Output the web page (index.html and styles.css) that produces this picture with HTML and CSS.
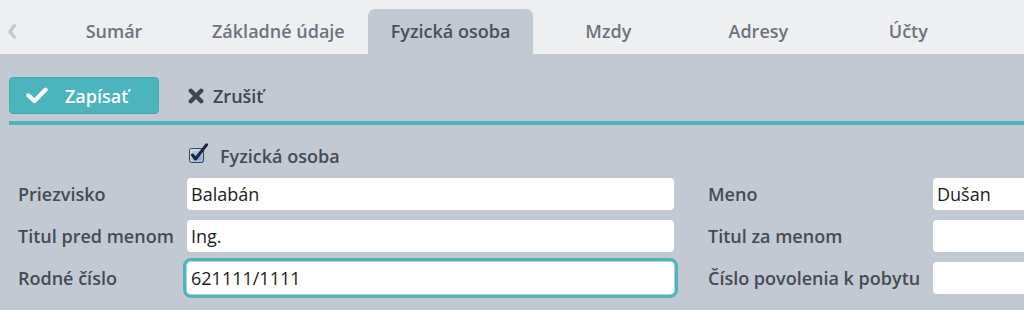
FILE: index.html
```html
<!DOCTYPE html>
<html lang="sk">
<head>
<meta charset="utf-8">
<title>Fyzická osoba</title>
<link rel="stylesheet" href="styles.css">
</head>
<body>
<div class="tabs">
  <span class="prev"><svg width="8" height="15" viewBox="0 0 8 15"><path d="M6.3 1.8 L2 7.5 L6.3 13.2" fill="none" stroke="#c4c7cc" stroke-width="3.2" stroke-linecap="round" stroke-linejoin="round"/></svg></span>
  <div class="tab">Sumár</div>
  <div class="tab">Základné údaje</div>
  <div class="tab active">Fyzická osoba</div>
  <div class="tab">Mzdy</div>
  <div class="tab">Adresy</div>
  <div class="tab">Účty</div>
</div>
<div class="content">
  <div class="toolbar">
    <button class="btn-save"><svg width="22" height="17" viewBox="0 0 22 17"><path d="M2.5 8.5 L8.5 14 L19.5 2.8" fill="none" stroke="#fff" stroke-width="4.2" stroke-linecap="round" stroke-linejoin="round"/></svg><span>Zapísať</span></button>
    <button class="btn-cancel"><svg width="16" height="16" viewBox="0 0 16 16"><path d="M2.8 2.8 L13.2 13.2 M13.2 2.8 L2.8 13.2" fill="none" stroke="#3f454d" stroke-width="4.4" stroke-linecap="round"/></svg><span>Zrušiť</span></button>
  </div>
  <div class="divider"></div>
  <div class="form">
    <div class="check-row">
      <span class="checkbox"><svg width="20" height="22" viewBox="0 0 20 22"><defs><linearGradient id="cb" x1="0" y1="0" x2="1" y2="1"><stop offset="0" stop-color="#cfdcef"/><stop offset="1" stop-color="#6e97cf"/></linearGradient></defs><rect x="0.5" y="5.5" width="14" height="14" rx="2" fill="url(#cb)" stroke="#3d4553"/><rect x="2" y="7" width="11" height="11" rx="1" fill="none" stroke="#fff" stroke-opacity="0.5"/><path d="M3.5 12 L6.5 16 L17.5 1.8" fill="none" stroke="#1b2440" stroke-width="3" stroke-linecap="round" stroke-linejoin="round"/></svg></span>
      <span class="check-label">Fyzická osoba</span>
    </div>
    <div class="grid">
      <label class="lbl">Priezvisko</label>
      <div class="field">Balabán</div>
      <label class="lbl lbl-r">Meno</label>
      <div class="field field-cut">Dušan</div>

      <label class="lbl">Titul pred menom</label>
      <div class="field">Ing.</div>
      <label class="lbl lbl-r">Titul za menom</label>
      <div class="field field-cut"></div>

      <label class="lbl">Rodné číslo</label>
      <div class="field focus">621111/1111</div>
      <label class="lbl lbl-r">Číslo povolenia k pobytu</label>
      <div class="field field-cut"></div>
    </div>
  </div>
</div>
</body>
</html>
```
FILE: styles.css
```css
html, body {
  margin: 0;
  padding: 0;
}
body {
  width: 1024px;
  height: 310px;
  overflow: hidden;
  background: #c2c9d2;
  font-family: "Open Sans", "Liberation Sans", sans-serif;
  font-size: 18px;
}
.tabs {
  display: flex;
  align-items: flex-end;
  height: 54px;
  background: #eeeff1;
}
.prev {
  width: 39px;
  height: 45px;
  box-sizing: border-box;
  padding-left: 8px;
  display: flex;
  align-items: center;
}
.prev svg { display: block; margin-top: -1px; }
.tab {
  min-width: 150px;
  box-sizing: border-box;
  padding: 0 23px;
  height: 45px;
  line-height: 44px;
  text-align: center;
  color: #6e747d;
  font-weight: 600;
  white-space: nowrap;
  border-radius: 7px 7px 0 0;
}
.tab.active {
  background: #c2c9d2;
  color: #4a5058;
}
.content {
  padding-left: 9px;
}
.toolbar {
  display: flex;
  align-items: center;
  padding-top: 23px;
  height: 37px;
}
.btn-save {
  width: 150px;
  height: 37px;
  border: 1px solid #45a9b1;
  border-radius: 4px;
  background: #4bb4bc;
  color: #fff;
  font: 600 18px "Open Sans", "Liberation Sans", sans-serif;
  display: flex;
  align-items: center;
  padding: 0 0 0 16px;
  box-sizing: border-box;
}
.btn-save svg { display: block; margin-right: 17px; }
.btn-cancel {
  margin-left: 29px;
  background: none;
  border: none;
  padding: 0;
  color: #3f454d;
  font: 600 18px "Open Sans", "Liberation Sans", sans-serif;
  display: flex;
  align-items: center;
}
.btn-cancel svg { display: block; margin-right: 9px; }
.divider {
  margin-top: 7px;
  height: 4px;
  background: #4fb3bb;
}
.form {
  padding-left: 9px;
}
.check-row {
  display: flex;
  align-items: center;
  height: 22px;
  margin-top: 20px;
  padding-left: 171px;
}
.checkbox svg { display: block; margin-top: -4px; }
.check-label {
  margin-left: 11px;
  color: #454b54;
  font-weight: 600;
  line-height: 22px;
}
.grid {
  display: grid;
  grid-template-columns: 169px 487px 259px 1fr;
  grid-auto-rows: 32px;
  row-gap: 10px;
  margin-top: 11px;
}
.lbl {
  display: flex;
  align-items: center;
  color: #454b54;
  font-weight: 600;
  white-space: nowrap;
}
.lbl-r {
  padding-left: 34px;
}
.field {
  background: #fff;
  border-radius: 4px;
  padding: 0 4px;
  line-height: 32px;
  color: #1c1c1c;
  white-space: nowrap;
  overflow: hidden;
}
.field-cut {
  border-radius: 4px 0 0 4px;
}
.field.focus {
  overflow: visible;
  box-shadow: 0 0 0 1px #a8d8da, 0 0 0 4px #56b3b5;
}
```
